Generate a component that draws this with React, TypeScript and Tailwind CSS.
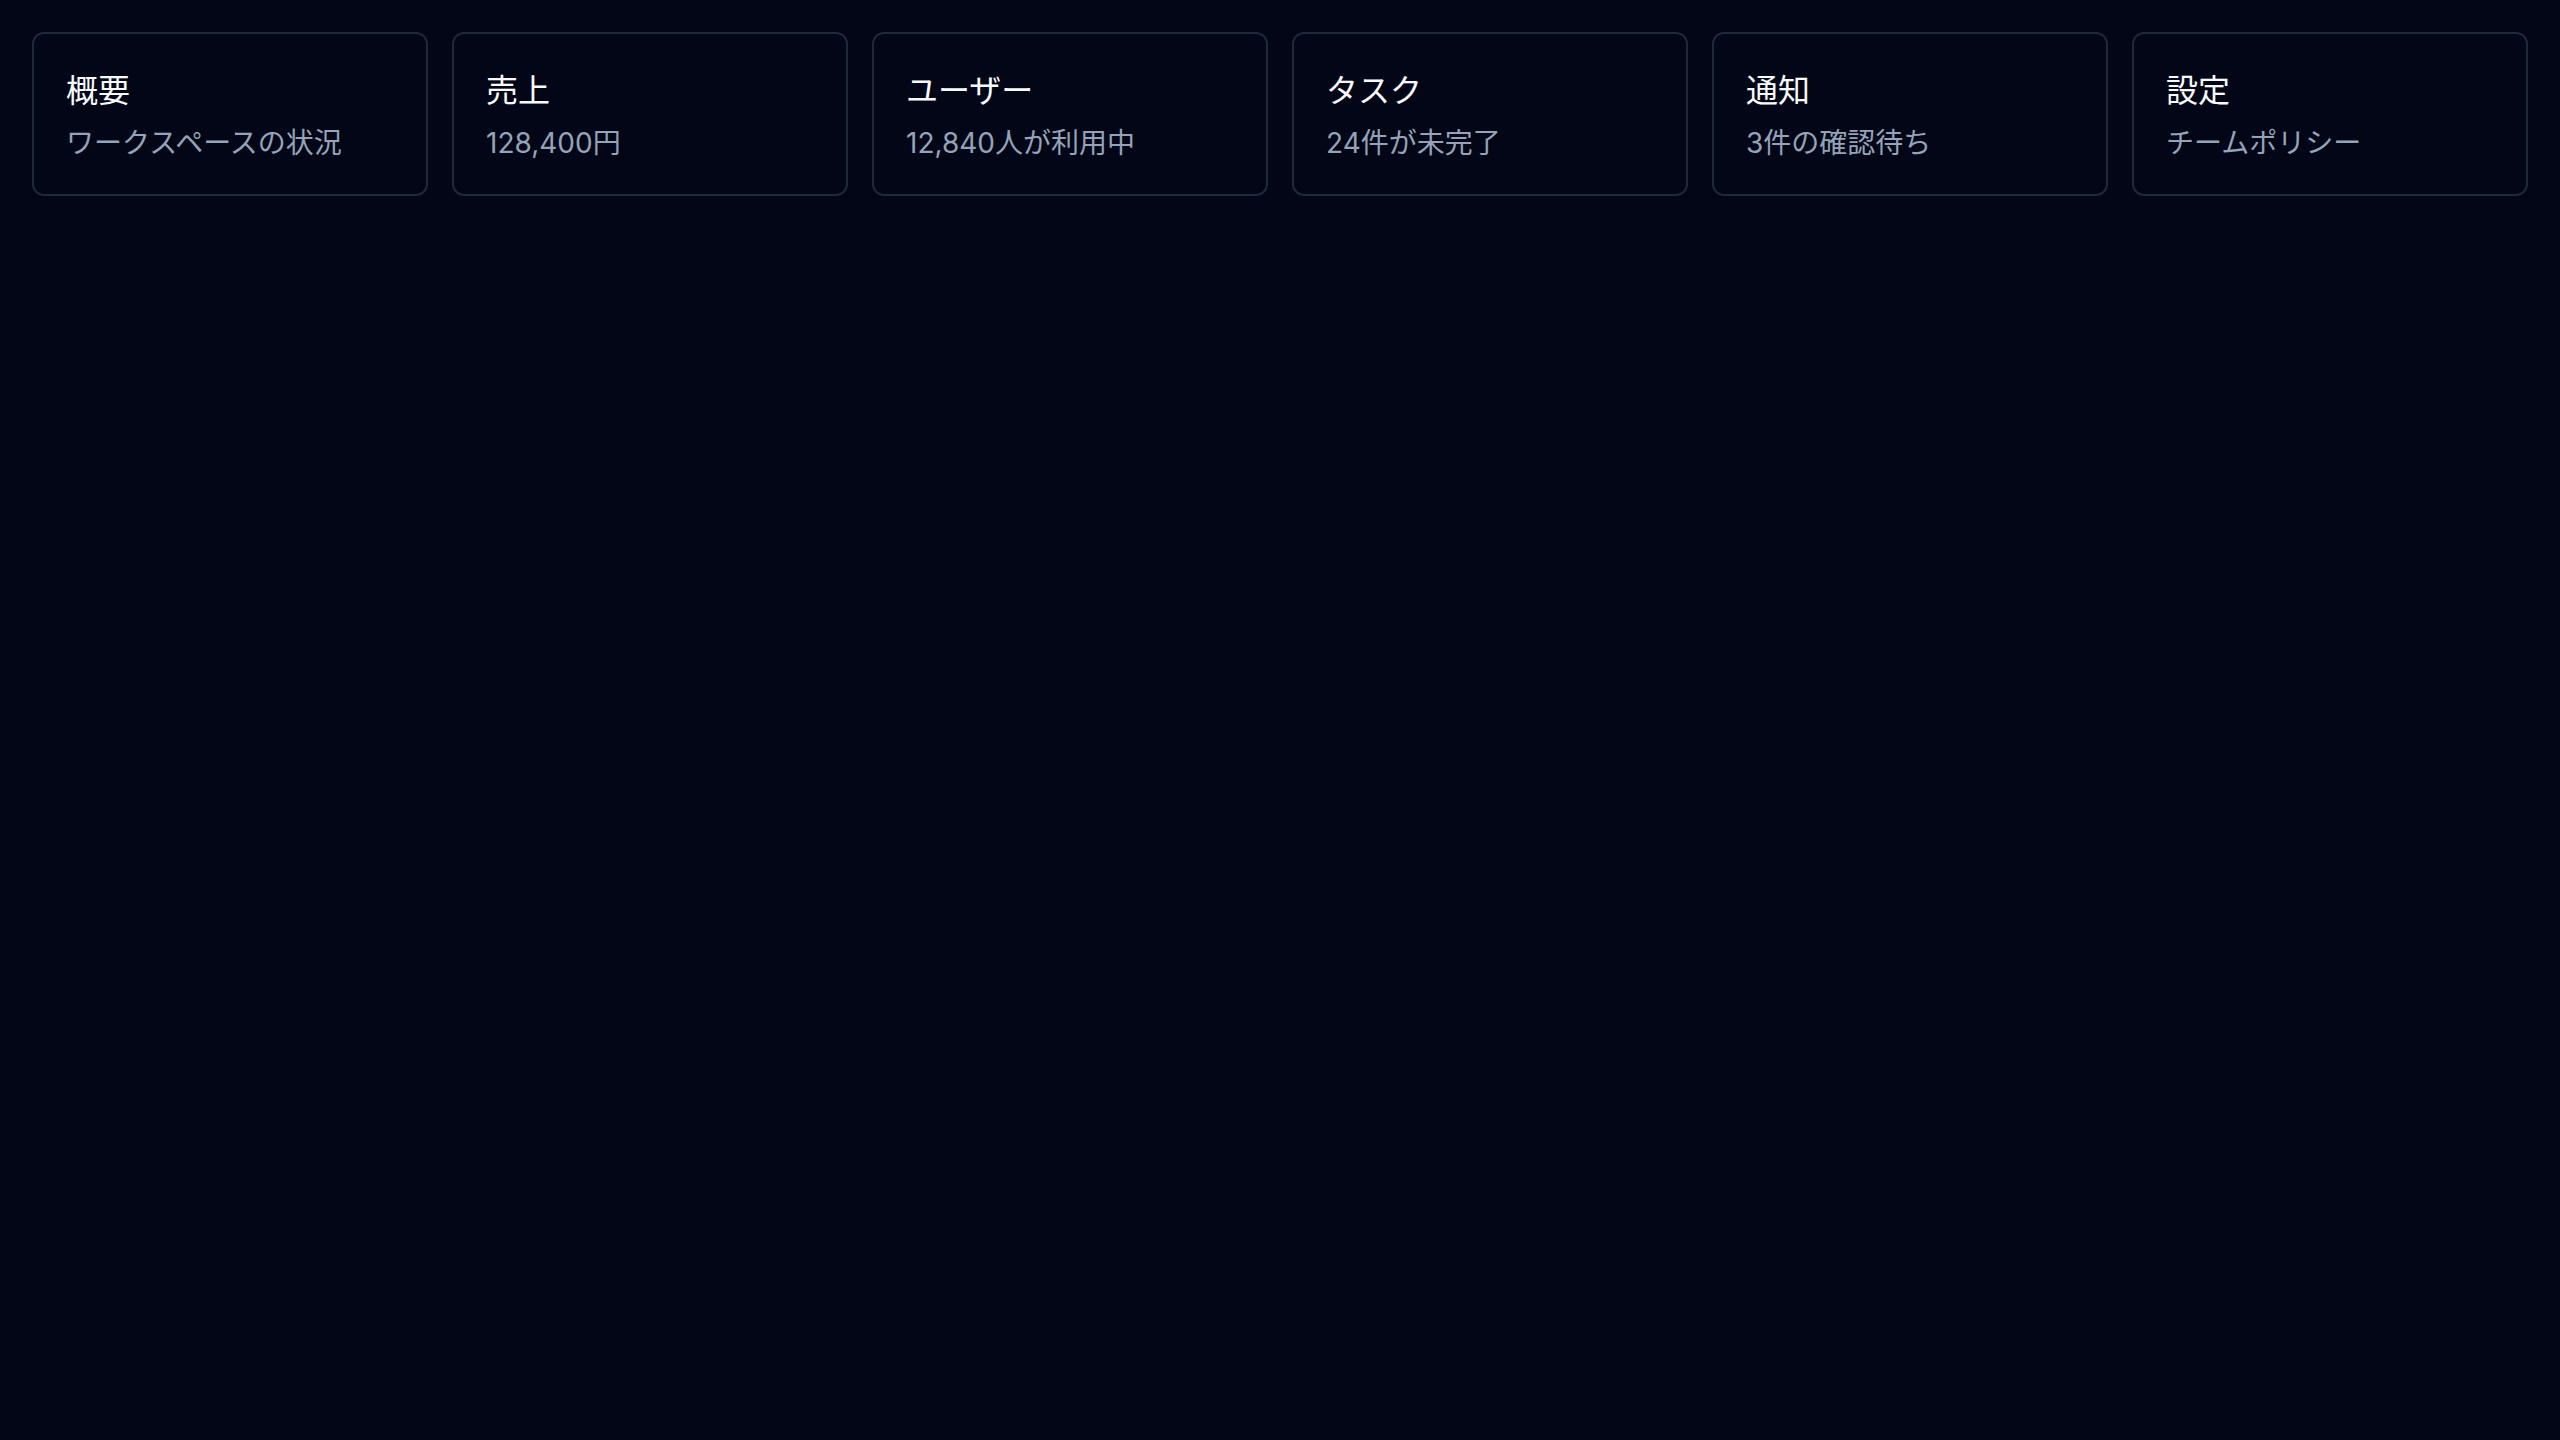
import React from "react";

const cards = [
  { title: "概要", sub: "ワークスペースの状況" },
  { title: "売上", sub: "128,400円" },
  { title: "ユーザー", sub: "12,840人が利用中" },
  { title: "タスク", sub: "24件が未完了" },
  { title: "通知", sub: "3件の確認待ち" },
  { title: "設定", sub: "チームポリシー" },
];

export default function App() {
  return (
    <div
      className="min-h-screen w-full bg-[#020617] p-8"
      style={{ fontFamily: '"Inter", "Noto Sans CJK JP", sans-serif' }}
    >
      <div className="grid grid-cols-6 gap-6">
        {cards.map((c) => (
          <div
            key={c.title}
            className="flex flex-col gap-[6px] rounded-xl border-2 border-[#1e293b] bg-[#020617] px-8 pt-8 pb-[30px]"
          >
            <div className="text-[32px] leading-[50px] text-[#f8fafc]">{c.title}</div>
            <div className="text-[28px] leading-[42px] text-[#94a3b8]">{c.sub}</div>
          </div>
        ))}
      </div>
    </div>
  );
}
